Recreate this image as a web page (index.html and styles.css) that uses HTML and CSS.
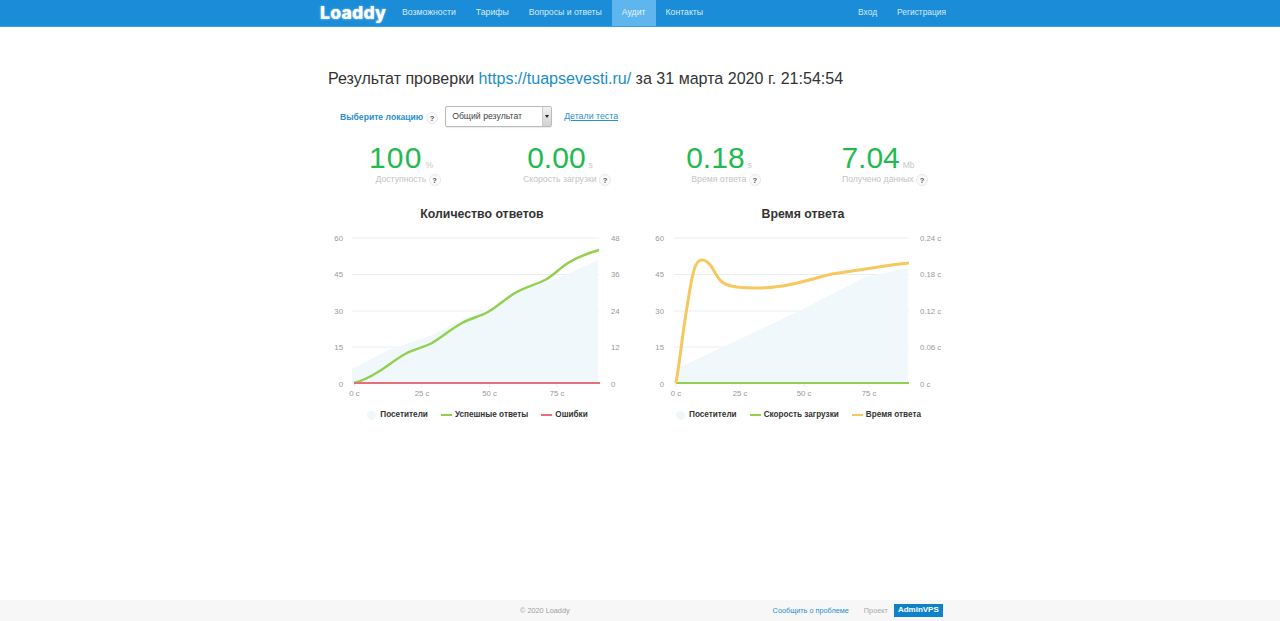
FILE: index.html
```html
<!DOCTYPE html>
<html lang="ru">
<head>
<meta charset="utf-8">
<title>Loaddy</title>
<link rel="stylesheet" href="styles.css">
</head>
<body>
<header class="topbar">
  <nav class="wrap nav">
    <a class="logo" href="#">Loaddy</a>
    <a class="nav-link" href="#">Возможности</a>
    <a class="nav-link" href="#">Тарифы</a>
    <a class="nav-link" href="#">Вопросы и ответы</a>
    <a class="nav-link active" href="#">Аудит</a>
    <a class="nav-link" href="#">Контакты</a>
    <span class="nav-spacer"></span>
    <a class="nav-link" href="#">Вход</a>
    <a class="nav-link" href="#">Регистрация</a>
  </nav>
</header>
<main class="wrap content">
  <h1 class="title">Результат проверки <a href="#">https://tuapsevesti.ru/</a> за 31 марта 2020 г. 21:54:54</h1>
  <div class="controls">
    <span class="loc-label">Выберите локацию</span>
    <span class="help">?</span>
    <div class="select"><span class="select-value">Общий результат</span><span class="select-btn"></span></div>
    <a class="details" href="#">Детали теста</a>
  </div>
  <section class="stats">
    <div class="stat">
      <div class="stat-top"><span class="num wide">100</span><span class="unit">%</span></div>
      <div class="stat-label">Доступность <span class="help">?</span></div>
    </div>
    <div class="stat">
      <div class="stat-top"><span class="num">0.00</span><span class="unit">s</span></div>
      <div class="stat-label">Скорость загрузки <span class="help">?</span></div>
    </div>
    <div class="stat">
      <div class="stat-top"><span class="num">0.18</span><span class="unit">s</span></div>
      <div class="stat-label">Время ответа <span class="help">?</span></div>
    </div>
    <div class="stat">
      <div class="stat-top"><span class="num">7.04</span><span class="unit">Mb</span></div>
      <div class="stat-label">Получено данных <span class="help">?</span></div>
    </div>
  </section>
  <section class="charts">
    <figure class="chart">
      <figcaption class="chart-title">Количество ответов</figcaption>
      <svg class="plot" viewBox="322 230 320 170" width="320" height="170">
        <g class="grid">
          <path d="M352 238H599M352 274.500H599M352 311H599M352 347H599M352 383H599"/>
          <path d="M354.500 383v4M422 383v4M489.500 383v4M557 383v4"/>
        </g>
        <path class="area" d="M352 369L388 350L432 335L465 318L492 308L515 292L545 283L572 272L598 260V383H352Z"/>
        <path class="line green" d="M354 383C362 381 370 377 378 372C388 366 397 358 407 353C416 349 424 347 432 343C442 337 451 329 462 323C471 318 479 317 488 312C497 307 505 299 515 293C525 287 535 285 545 280C553 276 560 268 568 263C578 257 588 253 599 250"/>
        <path class="line red" d="M354 383H600"/>
        <g class="axis">
          <text x="343" y="241" text-anchor="end">60</text>
          <text x="343" y="277" text-anchor="end">45</text>
          <text x="343" y="314" text-anchor="end">30</text>
          <text x="343" y="350" text-anchor="end">15</text>
          <text x="343" y="386.500" text-anchor="end">0</text>
          <text x="611" y="241">48</text>
          <text x="611" y="277">36</text>
          <text x="611" y="314">24</text>
          <text x="611" y="350">12</text>
          <text x="611" y="386.500">0</text>
          <text x="354.500" y="396" text-anchor="middle">0 с</text>
          <text x="422" y="396" text-anchor="middle">25 с</text>
          <text x="489.500" y="396" text-anchor="middle">50 с</text>
          <text x="557" y="396" text-anchor="middle">75 с</text>
        </g>
      </svg>
      <div class="legend">
        <span class="leg"><i class="key dot"></i>Посетители</span>
        <span class="leg"><i class="key green-key"></i>Успешные ответы</span>
        <span class="leg"><i class="key red-key"></i>Ошибки</span>
      </div>
    </figure>
    <figure class="chart">
      <figcaption class="chart-title">Время ответа</figcaption>
      <svg class="plot" viewBox="643 230 320 170" width="320" height="170">
        <g class="grid">
          <path d="M674 238H909M674 274.500H909M674 311H909M674 347H909M674 383H909"/>
          <path d="M676 383v4M740 383v4M804 383v4M869 383v4"/>
        </g>
        <path class="area" d="M676 383L678 368L742 338L805 308L865 277L908 268V383Z"/>
        <path class="line green base" d="M676 383H909"/>
        <path class="line yellow" d="M676 383C680 360 683 330 687 307C690 290 692 272 696 265C698 261 700 260 702 260C705 260 708 262 711 266C714 270 717 278 722 282C727 286 732 286 737 287C745 288 752 288 760 288C768 288 775 287 782 286C790 285 797 283 805 281C814 279 823 276 832 274C845 272 858 270 872 268C884 266 896 264 909 263"/>
        <g class="axis">
          <text x="664" y="241" text-anchor="end">60</text>
          <text x="664" y="277" text-anchor="end">45</text>
          <text x="664" y="314" text-anchor="end">30</text>
          <text x="664" y="350" text-anchor="end">15</text>
          <text x="664" y="386.500" text-anchor="end">0</text>
          <text x="920" y="241">0.24 с</text>
          <text x="920" y="277">0.18 с</text>
          <text x="920" y="314">0.12 с</text>
          <text x="920" y="350">0.06 с</text>
          <text x="920" y="386.500">0 с</text>
          <text x="676" y="396" text-anchor="middle">0 с</text>
          <text x="740" y="396" text-anchor="middle">25 с</text>
          <text x="804" y="396" text-anchor="middle">50 с</text>
          <text x="869" y="396" text-anchor="middle">75 с</text>
        </g>
      </svg>
      <div class="legend">
        <span class="leg"><i class="key dot"></i>Посетители</span>
        <span class="leg"><i class="key green-key"></i>Скорость загрузки</span>
        <span class="leg"><i class="key yellow-key"></i>Время ответа</span>
      </div>
    </figure>
  </section>
</main>
<footer class="footer">
  <div class="wrap foot-row">
    <span class="copy">© 2020 Loaddy</span>
    <a class="report" href="#">Сообщить о проблеме</a>
    <span class="project">Проект</span>
    <a class="brand" href="#">AdminVPS</a>
  </div>
</footer>
</body>
</html>
```
FILE: styles.css
```css
* { box-sizing: border-box; }
html, body { margin: 0; height: 100%; }
body {
  display: flex;
  flex-direction: column;
  min-height: 621px;
  font-family: "Liberation Sans", Arial, sans-serif;
  color: #333;
  background: #fff;
  overflow: hidden;
}
a { text-decoration: none; }
.wrap { width: 640px; margin: 0 auto; }

.topbar { height: 27px; background: #1b8dd8; border-bottom: 1px solid #3d9fe0; flex: none; }
.nav { display: flex; height: 26px; align-items: stretch; }
.logo {
  width: 72px;
  font: 800 17.600px/25px Inter, sans-serif;
  color: #fff;
  letter-spacing: 0.200px;
  text-shadow: 0 0 2px rgba(255,255,255,.8);
}
.nav-link {
  padding: 0 10px;
  font-size: 8.700px;
  line-height: 25px;
  color: #d5ebfa;
}
.nav-link.active { background: #5fb6ef; color: #e6f4fd; }
.nav-spacer { flex: 1; }
.nav-spacer ~ .nav-link { font-size: 8.400px; }
.nav-link:last-child { margin-right: 4px; }

.content { flex: 1; display: flex; flex-direction: column; }
.title {
  margin: 41px 0 0 8px;
  font-size: 16.060px;
  line-height: 20px;
  font-weight: 400;
  color: #333;
  white-space: nowrap;
}
.title a { color: #1a8ccc; }

.controls { display: flex; align-items: center; height: 21px; margin: 18px 0 0 20px; }
.loc-label { font-size: 8.600px; font-weight: 700; color: #2a8fd0; }
.help {
  display: inline-block;
  width: 12px;
  height: 12px;
  border: 1px solid #e8e8e8;
  border-radius: 50%;
  background: #fafafa;
  font: 700 7.500px/11px "Liberation Sans", sans-serif;
  color: #555;
  text-align: center;
  vertical-align: middle;
}
.controls .help { margin: 2px 7px 0 3px; }
.select {
  display: flex;
  justify-content: space-between;
  width: 107px;
  height: 21px;
  border: 1px solid #bbb;
  border-radius: 2px;
  font-size: 8.700px;
  line-height: 18px;
  color: #444;
  box-shadow: 0 1px 1px rgba(0,0,0,.08);
}
.select-value { padding-left: 6px; }
.select-btn {
  position: relative;
  width: 9px;
  background: linear-gradient(#f2f2f2, #d2d2d2);
  border-left: 1px solid #ccc;
}
.select-btn::after {
  content: "";
  position: absolute;
  left: 2px;
  top: 8px;
  border: 2px solid transparent;
  border-top: 3px solid #222;
  border-bottom: 0;
}
.details { margin: -1px 0 0 12px; font-size: 8.800px; color: #2a8fd0; text-decoration: underline; }

.stats { display: grid; grid-template-columns: repeat(4, 159px); margin: 17px 0 0 8.500px; }
.stat { display: flex; flex-direction: column; align-items: center; }
.stat-top { display: flex; align-items: baseline; height: 28px; margin-right: 14px; }
.num { font-size: 30px; line-height: 28px; color: #1fba50; }
.num.wide { letter-spacing: 1.200px; }
.unit { margin-left: 3px; font-size: 8.500px; color: #c8c8c8; }
.stat-label { margin-top: 1px; font-size: 8.700px; line-height: 13px; color: #c4c4c4; white-space: nowrap; }

.charts { display: grid; grid-template-columns: 320px 320px; gap: 1px; margin: 21px 0 0 2px; }
.chart { margin: 0; }
.chart-title { font-size: 12.300px; line-height: 15px; font-weight: 700; color: #333; text-align: center; }
.plot { display: block; margin-top: 8px; }
.grid path { fill: none; stroke: #e9edf1; stroke-width: 1; }
.area { fill: #f1f8fc; }
.line { fill: none; stroke-width: 2.500; }
.green { stroke: #92d050; }
.green.base { stroke-width: 2; }
.red { stroke: #e5707a; stroke-width: 2; }
.yellow { stroke: #f6c85f; stroke-width: 3; }
.axis text { font-size: 7.800px; fill: #999; font-family: "Liberation Sans", sans-serif; }

.legend { display: flex; justify-content: center; gap: 13px; margin-top: 10px; padding-right: 9px; font-size: 8.200px; line-height: 10px; font-weight: 700; color: #333; }
.leg { display: flex; align-items: center; white-space: nowrap; }
.key { display: inline-block; margin-right: 3px; }
.key.dot { width: 9px; height: 9px; border-radius: 50%; background: #f0f7fb; margin-right: 4px; }
.green-key, .red-key, .yellow-key { width: 11px; height: 2px; }
.green-key { background: #92d050; }
.red-key { background: #e5707a; }
.yellow-key { background: #f6c85f; }

.footer { height: 21px; background: #f7f7f7; flex: none; }
.foot-row { display: flex; align-items: center; height: 21px; font-size: 7.300px; }
.copy { margin-left: 200px; color: #a0a0a0; }
.report { margin-left: 203px; color: #2a8fd0; }
.project { margin-left: 15px; color: #aaa; }
.brand { margin-left: 6px; height: 13px; padding: 0 4px; background: #0d82c9; color: #fff; font-size: 8px; font-weight: 700; line-height: 12px; }
```
